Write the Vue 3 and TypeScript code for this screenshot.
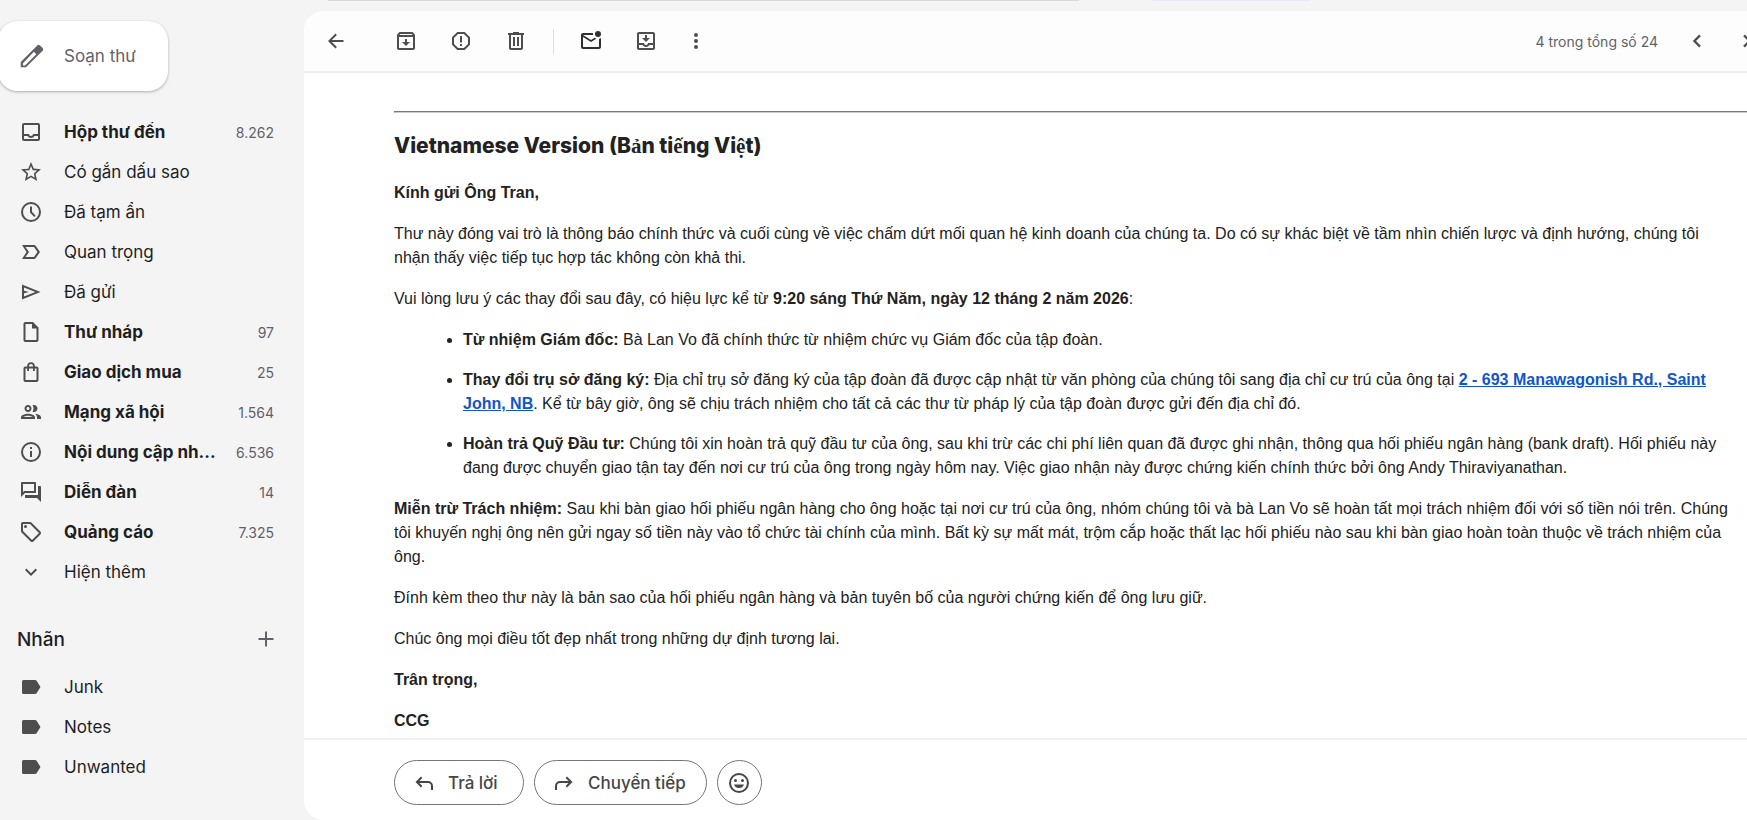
<script setup lang="ts">
interface NavItem {
  label: string
  icon: string
  count?: string
}

const paths: Record<string, string> = {
  inbox: 'M19 3H5c-1.1 0-2 .9-2 2v14c0 1.1.9 2 2 2h14c1.1 0 2-.9 2-2V5c0-1.1-.9-2-2-2zm0 16H5v-3h3.56c.69 1.19 1.97 2 3.45 2s2.75-.81 3.45-2H19v3zm0-5h-4.99c0 1.1-.9 2-2 2s-2-.9-2-2H5V5h14v9z',
  star: 'M22 9.24l-7.19-.62L12 2 9.19 8.63 2 9.24l5.46 4.73L5.82 21 12 17.27 18.18 21l-1.63-7.03L22 9.24zM12 15.4l-3.76 2.27 1-4.28-3.32-2.88 4.38-.38L12 6.1l1.71 4.04 4.38.38-3.32 2.88 1 4.28L12 15.4z',
  clock: 'M12 2a10 10 0 1 0 0 20 10 10 0 0 0 0-20zm0 18a8 8 0 1 1 0-16 8 8 0 0 1 0 16zM11 6.5h2v5.3l3.6 3.9-1.4 1.3L11 12.6z',
  important: 'M15 19H3l4.5-7L3 5h12c.65 0 1.26.31 1.63.84L21 12l-4.37 6.16c-.37.52-.98.84-1.63.84zm-8.5-2H15l3.5-5L15 7H6.5l3.5 5-3.5 5z',
  sent: 'M3 4.5v15L21.5 12zM5 7.4 16.4 12 5 16.6v-3.3l5-1.3-5-1.3z',
  draft: 'M14 2H6.5C5.4 2 4.5 2.9 4.5 4v16c0 1.1.9 2 2 2h11c1.1 0 2-.9 2-2V7.5zM6.5 20V4H13v4.5h4.5V20z',
  bag: 'M17.5 6.5h-1.7V6a3.8 3.8 0 0 0-7.6 0v.5H6.5c-1.1 0-2 .9-2 2V20c0 1.1.9 2 2 2h11c1.1 0 2-.9 2-2V8.5c0-1.1-.9-2-2-2zM10 6a2 2 0 0 1 4 0v.5h-4zM6.5 20V8.5h1.7V11H10V8.5h4V11h1.8V8.5h1.7V20z',
  people: 'M9 13.75c-2.34 0-7 1.17-7 3.5V19h14v-1.75c0-2.33-4.66-3.5-7-3.5zM4.34 17c.84-.58 2.87-1.25 4.66-1.25s3.82.67 4.66 1.25H4.34zM9 12c1.93 0 3.5-1.57 3.5-3.5S10.93 5 9 5 5.5 6.57 5.5 8.5 7.07 12 9 12zm0-5c.83 0 1.5.67 1.5 1.5S9.83 10 9 10s-1.5-.67-1.5-1.5S8.17 7 9 7zm7.04 6.81c1.16.84 1.96 1.96 1.96 3.44V19h4v-1.75c0-2.02-3.5-3.17-5.96-3.44zM15 12c1.93 0 3.5-1.57 3.5-3.5S16.93 5 15 5c-.54 0-1.04.13-1.5.35.63.89 1 1.98 1 3.15s-.37 2.26-1 3.15c.46.22.96.35 1.5.35z',
  info: 'M12 2a10 10 0 1 0 0 20 10 10 0 0 0 0-20zm0 18a8 8 0 1 1 0-16 8 8 0 0 1 0 16zM11 7h2v2h-2zM11 11h2v6h-2z',
  forum: 'M15 4v7H5.17L4 12.17V4h11m1-2H3c-.55 0-1 .45-1 1v14l4-4h10c.55 0 1-.45 1-1V3c0-.55-.45-1-1-1zm5 4h-2v9H6v2c0 .55.45 1 1 1h11l4 4V7c0-.55-.45-1-1-1z',
  tag: 'M21.41 11.58l-9-9C12.05 2.22 11.55 2 11 2H4c-1.1 0-2 .9-2 2v7c0 .55.22 1.05.59 1.42l9 9c.36.36.86.58 1.41.58s1.05-.22 1.41-.59l7-7c.37-.36.59-.86.59-1.41s-.23-1.06-.59-1.42zM13 20.01L4 11V4h7l9 8.99-7 7.02zM6.5 5a1.5 1.5 0 1 0 0 3 1.5 1.5 0 0 0 0-3z',
  chevronDown: 'M7.4 8.6 12 13.2l4.6-4.6L18 10l-6 6-6-6z',
  label: 'M17.63 5.84C17.27 5.33 16.67 5 16 5H4.5C3.7 5 3 5.7 3 6.5v11c0 .8.7 1.5 1.5 1.5H16c.67 0 1.27-.33 1.63-.84L21.5 12z',
  plus: 'M19.5 13H13v6.5h-2V13H4.5v-2H11V4.5h2V11h6.5z',
  pencil: 'M13.5 8.6l1.9 1.9L6.4 19.5H4.8v-1.7l8.7-9.2M17.3 3c-.4 0-.8.2-1.1.5L3 16.8V21h4.2L20.5 7.8c.6-.6.6-1.6 0-2.2l-2.1-2.1c-.3-.3-.7-.5-1.1-.5z',
  back: 'M19.5 11H7.83l5.09-5.09L11.5 4.5 4 12l7.5 7.5 1.42-1.41L7.83 13H19.5z',
  archive: 'M20.54 5.23l-1.39-1.68C18.88 3.21 18.47 3 18 3H6c-.47 0-.88.21-1.16.55L3.46 5.23C3.17 5.57 3 6.02 3 6.5V19c0 1.1.9 2 2 2h14c1.1 0 2-.9 2-2V6.5c0-.48-.17-.93-.46-1.27zM6.24 5h11.52l.83 1H5.42zM5 19V8h14v11zM13 10h-2v3H8l4 4 4-4h-3z',
  spam: 'M15.73 3H8.27L3 8.27v7.46L8.27 21h7.46L21 15.73V8.27zM19 14.9 14.9 19H9.1L5 14.9V9.1L9.1 5h5.8L19 9.1zM11 7h2v6.5h-2zM11 15h2v2h-2z',
  trash: 'M15 4V3H9v1H4v2h1v13c0 1.1.9 2 2 2h10c1.1 0 2-.9 2-2V6h1V4zm2 15H7V6h10zM9 8h2v9H9zM13 8h2v9h-2z',
  unread: 'M22 8.98V18c0 1.1-.9 2-2 2H4c-1.1 0-2-.9-2-2V6c0-1.1.9-2 2-2h10.1c-.06.32-.1.66-.1 1s.04.68.1 1H4l8 5 3.67-2.29c.47.43 1.02.76 1.63.98L12 13 4 8v10h16V9.9c.74-.15 1.42-.48 2-.92zM16 5a3 3 0 1 0 6 0 3 3 0 0 0-6 0z',
  move: 'M19 3H5c-1.1 0-2 .9-2 2v14c0 1.1.9 2 2 2h14c1.1 0 2-.9 2-2V5c0-1.1-.9-2-2-2zm0 16H5v-3h3.56c.69 1.19 1.97 2 3.45 2s2.75-.81 3.45-2H19zm0-5h-4.99c0 1.1-.9 2-2 2s-2-.9-2-2H5V5h14zM16 9h-3V6h-2v3H8l4 4z',
  more: 'M12 8a2 2 0 1 0 0-4 2 2 0 0 0 0 4zm0 2a2 2 0 1 0 0 4 2 2 0 0 0 0-4zm0 6a2 2 0 1 0 0 4 2 2 0 0 0 0-4z',
  prev: 'M15.8 7.2 14.2 5.6 7.8 12l6.4 6.4 1.6-1.6L11 12z',
  next: 'M8.2 7.2 9.8 5.6l6.4 6.4-6.4 6.4-1.6-1.6L13 12z',
  reply: 'M9 5.5 10.4 7 7.4 10H16a5 5 0 0 1 5 5v4h-2v-4a3 3 0 0 0-3-3H7.4l3 3L9 16.5 3.5 11z',
  forward: 'M15 5.5 13.6 7l3 3H8a5 5 0 0 0-5 5v4h2v-4a3 3 0 0 1 3-3h8.6l-3 3 1.4 1.5 5.5-5.5z',
  smile: 'M12 2a10 10 0 1 0 0 20 10 10 0 0 0 0-20zm0 18a8 8 0 1 1 0-16 8 8 0 0 1 0 16zM8.5 8a1.5 1.5 0 1 0 0 3 1.5 1.5 0 0 0 0-3zM15.5 8a1.5 1.5 0 1 0 0 3 1.5 1.5 0 0 0 0-3zM7 13.5h10a5.3 5.3 0 0 1-10 0z',
}

const folders: NavItem[] = [
  { label: 'Hộp thư đến', icon: 'inbox', count: '8.262' },
  { label: 'Có gắn dấu sao', icon: 'star' },
  { label: 'Đã tạm ẩn', icon: 'clock' },
  { label: 'Quan trọng', icon: 'important' },
  { label: 'Đã gửi', icon: 'sent' },
  { label: 'Thư nháp', icon: 'draft', count: '97' },
  { label: 'Giao dịch mua', icon: 'bag', count: '25' },
  { label: 'Mạng xã hội', icon: 'people', count: '1.564' },
  { label: 'Nội dung cập nh...', icon: 'info', count: '6.536' },
  { label: 'Diễn đàn', icon: 'forum', count: '14' },
  { label: 'Quảng cáo', icon: 'tag', count: '7.325' },
]

const labels = ['Junk', 'Notes', 'Unwanted']

const triage = [
  { icon: 'archive', title: 'Lưu trữ' },
  { icon: 'spam', title: 'Báo cáo thư rác' },
  { icon: 'trash', title: 'Xóa' },
]
</script>

<template>
  <div class="app">
    <div class="edge search-edge" aria-hidden="true"></div>
    <div class="edge chip-edge" aria-hidden="true"></div>
    <aside class="sidebar">
      <button class="compose" type="button">
        <svg class="icon-lg" viewBox="0 0 24 24"><path fill-rule="evenodd" :d="paths.pencil" /></svg>
        <span>Soạn thư</span>
      </button>

      <nav class="nav">
        <a v-for="f in folders" :key="f.label" href="#" class="row" :class="{ unread: f.count }">
          <svg class="icon" viewBox="0 0 24 24"><path :d="paths[f.icon]" /></svg>
          <span class="name">{{ f.label }}</span>
          <span v-if="f.count" class="count">{{ f.count }}</span>
        </a>
        <button class="row" type="button">
          <svg class="icon" viewBox="0 0 24 24"><path :d="paths.chevronDown" /></svg>
          <span class="name">Hiện thêm</span>
        </button>
      </nav>

      <div class="labels-head">
        <h2>Nhãn</h2>
        <button class="add" type="button" aria-label="Tạo nhãn mới">
          <svg class="icon" viewBox="0 0 24 24"><path :d="paths.plus" /></svg>
        </button>
      </div>
      <nav>
        <a v-for="l in labels" :key="l" href="#" class="row">
          <svg class="icon" viewBox="0 0 24 24"><path :d="paths.label" /></svg>
          <span class="name">{{ l }}</span>
        </a>
      </nav>
    </aside>

    <main class="panel">
      <header class="toolbar">
        <button class="tool back" type="button" aria-label="Quay lại">
          <svg class="icon" viewBox="0 0 24 24"><path :d="paths.back" /></svg>
        </button>
        <button v-for="t in triage" :key="t.icon" class="tool" type="button" :aria-label="t.title">
          <svg class="icon" viewBox="0 0 24 24"><path :d="paths[t.icon]" /></svg>
        </button>
        <span class="sep"></span>
        <button class="tool dark" type="button" aria-label="Đánh dấu là chưa đọc">
          <svg class="icon" viewBox="0 0 24 24"><path :d="paths.unread" /></svg>
        </button>
        <button class="tool" type="button" aria-label="Di chuyển tới">
          <svg class="icon" viewBox="0 0 24 24"><path :d="paths.move" /></svg>
        </button>
        <button class="tool kebab" type="button" aria-label="Thêm">
          <svg class="icon" viewBox="0 0 24 24"><path :d="paths.more" /></svg>
        </button>
        <span class="position">4 trong tổng số 24</span>
        <button class="tool" type="button" aria-label="Mới hơn">
          <svg class="icon" viewBox="0 0 24 24"><path :d="paths.prev" /></svg>
        </button>
        <button class="tool next" type="button" aria-label="Cũ hơn">
          <svg class="icon" viewBox="0 0 24 24"><path :d="paths.next" /></svg>
        </button>
      </header>

      <article class="message">
        <hr />
        <div class="body">
          <h3>Vietnamese Version (B<span class="alt">ả</span>n ti<span class="alt">ế</span>ng Vi<span class="alt">ệ</span>t)</h3>
          <p><strong>Kính gửi Ông Tran,</strong></p>
          <p>
            Thư này đóng vai trò là thông báo chính thức và cuối cùng về việc chấm dứt mối quan hệ kinh doanh của chúng
            ta. Do có sự khác biệt về tầm nhìn chiến lược và định hướng, chúng tôi nhận thấy việc tiếp tục hợp tác không
            còn khả thi.
          </p>
          <p>
            Vui lòng lưu ý các thay đổi sau đây, có hiệu lực kể từ
            <strong>9:20 sáng Thứ Năm, ngày 12 tháng 2 năm 2026</strong>:
          </p>
          <ul>
            <li><strong>Từ nhiệm Giám đốc:</strong> Bà Lan Vo đã chính thức từ nhiệm chức vụ Giám đốc của tập đoàn.</li>
            <li>
              <strong>Thay đổi trụ sở đăng ký:</strong> Địa chỉ trụ sở đăng ký của tập đoàn đã được cập nhật từ văn
              phòng của chúng tôi sang địa chỉ cư trú của ông tại
              <a href="#"><strong>2 - 693 Manawagonish Rd., Saint John, NB</strong></a>. Kể từ bây giờ, ông sẽ chịu
              trách nhiệm cho tất cả các thư từ pháp lý của tập đoàn được gửi đến địa chỉ đó.
            </li>
            <li>
              <strong>Hoàn trả Quỹ Đầu tư:</strong> Chúng tôi xin hoàn trả quỹ đầu tư của ông, sau khi trừ các chi phí
              liên quan đã được ghi nhận, thông qua hối phiếu ngân hàng (bank draft). Hối phiếu này đang được chuyển
              giao tận tay đến nơi cư trú của ông trong ngày hôm nay. Việc giao nhận này được chứng kiến chính thức bởi
              ông Andy Thiraviyanathan.
            </li>
          </ul>
          <p>
            <strong>Miễn trừ Trách nhiệm:</strong> Sau khi bàn giao hối phiếu ngân hàng cho ông hoặc tại nơi cư trú của
            ông, nhóm chúng tôi và bà Lan Vo sẽ hoàn tất mọi trách nhiệm đối với số tiền nói trên. Chúng tôi khuyến nghị
            ông nên gửi ngay số tiền này vào tổ chức tài chính của mình. Bất kỳ sự mất mát, trộm cắp hoặc thất lạc hối
            phiếu nào sau khi bàn giao hoàn toàn thuộc về trách nhiệm của ông.
          </p>
          <p>Đính kèm theo thư này là bản sao của hối phiếu ngân hàng và bản tuyên bố của người chứng kiến để ông lưu giữ.</p>
          <p>Chúc ông mọi điều tốt đẹp nhất trong những dự định tương lai.</p>
          <p><strong>Trân trọng,</strong></p>
          <p><strong>CCG</strong></p>
        </div>
      </article>

      <footer class="actions">
        <button class="pill" type="button">
          <svg class="icon" viewBox="0 0 24 24"><path :d="paths.reply" /></svg>
          <span>Trả lời</span>
        </button>
        <button class="pill" type="button">
          <svg class="icon" viewBox="0 0 24 24"><path :d="paths.forward" /></svg>
          <span>Chuyển tiếp</span>
        </button>
        <button class="pill round" type="button" aria-label="Thêm biểu tượng cảm xúc">
          <svg class="icon" viewBox="0 0 24 24"><path :d="paths.smile" /></svg>
        </button>
      </footer>
    </main>
  </div>
</template>

<style>
body {
  background: #f4f4f4;
}
</style>

<style scoped>
.app {
  position: relative;
  display: grid;
  grid-template-columns: 304px minmax(0, 1fr);
  min-height: 100vh;
  box-sizing: border-box;
  padding-top: 11px;
  overflow: hidden;
  background: #f4f4f4;
  color: #1f1f1f;
  font-family: Inter, Roboto, "Noto Sans", sans-serif;
  font-size: 17px;
}

.edge {
  position: absolute;
  top: 0;
  height: 1px;
}

.search-edge {
  left: 328px;
  width: 43%;
  background: #d9d9d9;
}

.chip-edge {
  left: 66%;
  width: 9%;
  background: #e4eaf6;
}

button {
  border: 0;
  padding: 0;
  background: none;
  color: inherit;
  font: inherit;
  cursor: pointer;
}

svg {
  display: block;
  flex: none;
  fill: currentColor;
}

.icon {
  width: 24px;
  height: 24px;
}

.icon-lg {
  width: 30px;
  height: 30px;
}

.sidebar {
  padding-top: 10px;
}

.compose {
  display: flex;
  align-items: center;
  gap: 17px;
  height: 70px;
  margin-left: -2px;
  padding: 0 32px 0 19px;
  border-radius: 20px;
  background: #fff;
  color: #5f6368;
  box-shadow: 0 1px 3px rgba(60, 64, 67, 0.4);
}

.nav {
  margin-top: 21px;
}

.row {
  display: flex;
  align-items: center;
  width: 100%;
  height: 40px;
  box-sizing: border-box;
  padding: 0 30px 0 19px;
  color: #1f1f1f;
  text-align: left;
  text-decoration: none;
}

.row .icon {
  margin-right: 21px;
  color: #4d4f4e;
}

.name {
  flex: 1;
  min-width: 0;
  overflow: hidden;
  white-space: nowrap;
  text-overflow: ellipsis;
}

.unread .name {
  font-weight: 700;
}

.count {
  margin-left: 12px;
  color: #5f6368;
  font-size: 14px;
}

.labels-head {
  display: flex;
  align-items: center;
  justify-content: space-between;
  height: 50px;
  margin: 22px 26px 3px 17px;
}

.labels-head h2 {
  margin: 0;
  font-size: 19px;
  font-weight: 500;
}

.add {
  color: #5f6368;
}

.panel {
  display: flex;
  flex-direction: column;
  min-width: 0;
  border-radius: 20px 0 0 20px;
  background: #fff;
  overflow: hidden;
}

.toolbar {
  display: flex;
  align-items: center;
  gap: 11px;
  height: 60px;
  padding-left: 10px;
  border-bottom: 2px solid #efefef;
  background: #fdfdfd;
  color: #4d4f4e;
}

.tool {
  display: grid;
  place-items: center;
  flex: none;
  width: 44px;
  height: 44px;
}

.back {
  margin-right: 15px;
}

.dark {
  color: #303030;
}

.kebab {
  margin-left: -5px;
}

.sep {
  width: 1px;
  height: 25px;
  margin: 0 4px;
  background: #dedede;
}

.position {
  margin-left: auto;
  margin-right: 6px;
  color: #5f6368;
  font-size: 14px;
}

.next {
  margin: 0 -22px 0 -5px;
}

.message {
  flex: 1;
  padding: 38px 0 0 90px;
  color: #222;
  font-family: "Liberation Sans", Arial, sans-serif;
  font-size: 16px;
  line-height: 24px;
}

hr {
  margin: 0;
  border: 1px inset #ccc;
  border-right: 0;
}

.body {
  padding-right: 12px;
}

h3 {
  margin: 21px 0 23px;
  font-family: Inter, sans-serif;
  font-size: 21px;
  font-weight: 800;
}

.alt {
  font-family: "Liberation Serif", serif;
  font-weight: 700;
}

p,
ul {
  margin: 0 0 17px;
}

p:last-child {
  margin-bottom: 0;
}

ul {
  padding-left: 69px;
}

li {
  margin-bottom: 16px;
}

li a {
  color: #15c;
}

.actions {
  display: flex;
  gap: 10px;
  padding: 20px 90px 15px;
  border-top: 2px solid #f0f0f0;
  color: #444746;
}

.pill {
  display: flex;
  align-items: center;
  gap: 12px;
  min-width: 130px;
  height: 45px;
  padding: 0 20px 0 17px;
  border: 1px solid #747775;
  border-radius: 23px;
  font-weight: 500;
}

.pill.round {
  justify-content: center;
  min-width: 0;
  width: 45px;
  padding: 0;
}
</style>
